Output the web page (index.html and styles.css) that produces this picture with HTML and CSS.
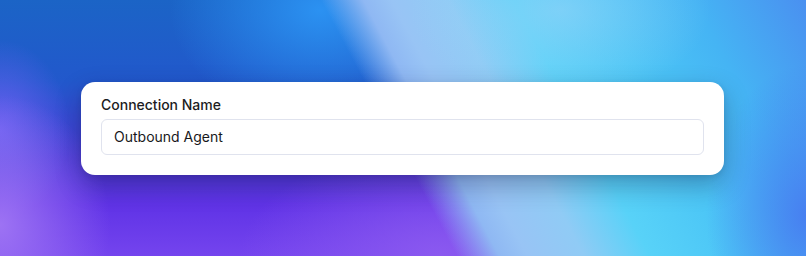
FILE: index.html
```html
<!DOCTYPE html>
<html lang="en">
<head>
    <meta charset="UTF-8">
    <meta name="viewport" content="width=device-width, initial-scale=1.0">
    <title>Connection</title>
    <link rel="stylesheet" href="styles.css">
</head>
<body>
    <!-- Connection Card -->
    <div class="card">
        <label class="field-label" for="connection_name">Connection Name</label>
        <input class="field-input" type="text" id="connection_name" value="Outbound Agent">
    </div>
</body>
</html>
```

FILE: styles.css
```css
/* General Styles */
body {
    margin: 0;
    padding: 0;
    width: 806px;
    height: 256px;
    display: flex;
    justify-content: center;
    align-items: center;
    overflow: hidden;
    font-family: 'Inter', 'Noto Sans', sans-serif;
    color: #18181b;
    background:
        /* right edge blue */
        radial-gradient(ellipse 100px 150px at 806px 215px, rgba(72, 118, 240, 0.85), rgba(72, 118, 240, 0) 100%),
        /* pale haze at the top */
        radial-gradient(ellipse 150px 90px at 560px 10px, rgba(160, 212, 248, 0.55), rgba(160, 212, 248, 0) 100%),
        /* light streak on the right */
        linear-gradient(62deg,
            rgba(140, 180, 245, 0) 48.5%,
            #8fb8f3 53%,
            #98c4f5 56%,
            #90cbf5 62%,
            #58d2f8 69%,
            #4cc6f6 78%,
            #45b4f4 88%,
            #4a90f0 100%),
        /* left edge purples */
        radial-gradient(ellipse 110px 130px at 0px 225px, rgba(160, 118, 244, 0.95), rgba(160, 118, 244, 0) 100%),
        radial-gradient(ellipse 70px 90px at 0px 130px, rgba(110, 100, 244, 0.9), rgba(110, 100, 244, 0) 100%),
        /* bright blue near the top middle */
        radial-gradient(ellipse 150px 110px at 320px 10px, rgba(44, 148, 244, 0.95), rgba(44, 148, 244, 0) 100%),
        /* violet at the bottom middle */
        radial-gradient(ellipse 200px 110px at 440px 256px, rgba(140, 90, 240, 0.95), rgba(140, 90, 240, 0) 100%),
        linear-gradient(to bottom, #1b64c6 0%, #2258cc 32%, #4a3bd8 62%, #6033e6 80%, #7444ee 100%);
}

/* Card Styles */
.card {
    width: 603px;
    padding: 13px 20px 20px;
    margin-right: 1px;
    background-color: #ffffff;
    border-radius: 14px;
    box-shadow: 0 10px 26px rgba(20, 20, 60, 0.32), 0 2px 6px rgba(0, 0, 0, 0.08);
    display: flex;
    flex-direction: column;
    gap: 4px;
}

.field-label {
    font-size: 14px;
    line-height: 20px;
    font-weight: 500;
    color: #1c1c22;
}

.field-input {
    height: 36px;
    box-sizing: border-box;
    padding: 0 12px;
    font-family: inherit;
    font-size: 14px;
    color: #18181b;
    background-color: #ffffff;
    border: 1px solid #e0e3ee;
    border-radius: 6px;
    outline: none;
}
```
